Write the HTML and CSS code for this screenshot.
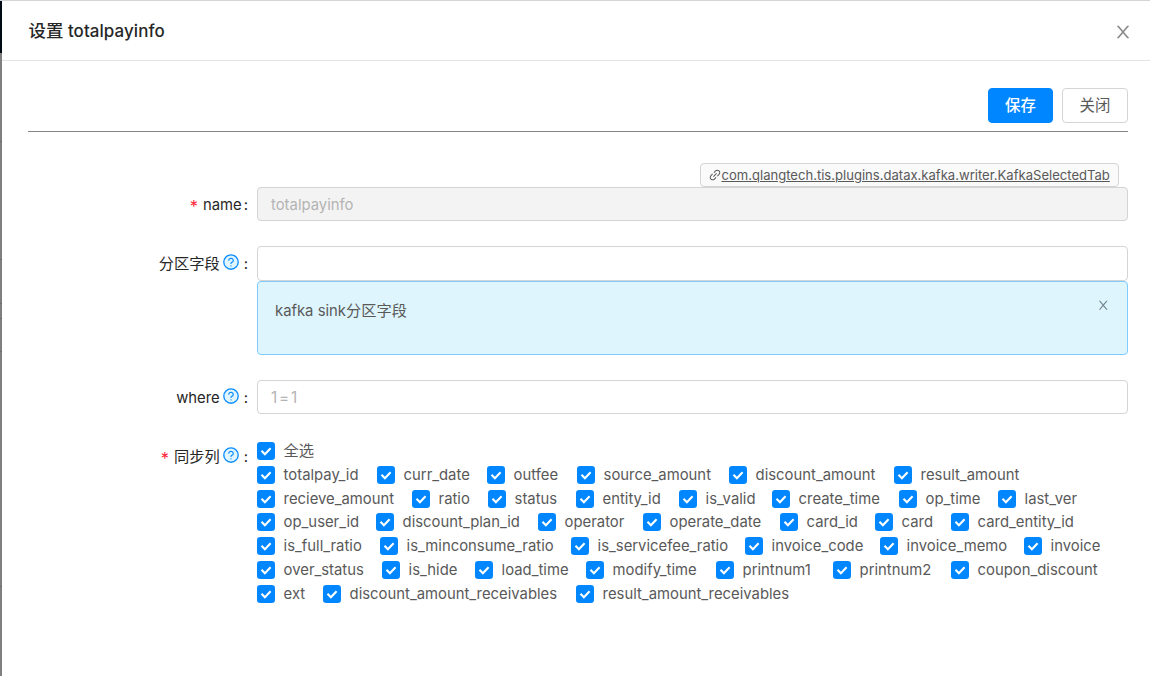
FILE: index.html
```html
<!DOCTYPE html>
<html lang="zh">
<head>
<meta charset="utf-8">
<title>设置 totalpayinfo</title>
<link rel="stylesheet" href="styles.css">
</head>
<body>
<svg class="defs">
  <symbol id="close" viewBox="0 0 1024 1024"><path d="M563.8 512l262.5-312.9c4.4-5.2.7-13.1-6.1-13.1h-79.8c-4.7 0-9.2 2.1-12.3 5.7L511.6 449.8 295.1 191.7c-3-3.6-7.5-5.7-12.3-5.7H203c-6.8 0-10.5 7.9-6.1 13.1L459.4 512 196.9 824.9A7.95 7.95 0 0 0 203 838h79.8c4.7 0 9.2-2.1 12.3-5.7l216.5-258.1 216.5 258.1c3 3.6 7.5 5.7 12.3 5.7h79.8c6.8 0 10.5-7.9 6.1-13.1L563.8 512z"/></symbol>
  <symbol id="link" viewBox="0 0 1024 1024"><path d="M574 665.4a8.03 8.03 0 0 0-11.3 0L446.5 781.6c-53.8 53.8-144.6 59.5-204 0-59.5-59.5-53.8-150.2 0-204l116.2-116.2c3.1-3.1 3.1-8.2 0-11.3l-39.8-39.8a8.03 8.03 0 0 0-11.3 0L191.4 526.5c-84.6 84.6-84.6 221.5 0 306s221.5 84.6 306 0l116.2-116.2c3.1-3.1 3.1-8.2 0-11.3L574 665.4zm258.6-474c-84.6-84.6-221.5-84.6-306 0L410.3 307.6a8.03 8.03 0 0 0 0 11.3l39.7 39.7c3.1 3.1 8.2 3.1 11.3 0l116.2-116.2c53.8-53.8 144.6-59.5 204 0 59.5 59.5 53.8 150.2 0 204L665.3 562.6a8.03 8.03 0 0 0 0 11.3l39.8 39.8c3.1 3.1 8.2 3.1 11.3 0l116.2-116.2c84.5-84.6 84.5-221.5 0-306.1zM610.1 372.3a8.03 8.03 0 0 0-11.3 0L372.3 598.7a8.03 8.03 0 0 0 0 11.3l39.6 39.6c3.1 3.1 8.2 3.1 11.3 0l226.4-226.4c3.1-3.1 3.1-8.2 0-11.3l-39.5-39.6z"/></symbol>
  <symbol id="help" viewBox="0 0 1024 1024"><circle cx="512" cy="512" r="410" fill="#e0f5ff" stroke="#0a8cff" stroke-width="76"/><path fill="#0a8cff" d="M623.6 316.7C593.6 290.4 554 276 512 276s-81.6 14.5-111.6 40.7C369.2 344 352 380.7 352 420v7.6c0 4.4 3.6 8 8 8h48c4.4 0 8-3.6 8-8V420c0-44.1 43.1-80 96-80s96 35.9 96 80c0 31.1-22 59.6-56.1 72.7-21.2 8.1-39.2 22.3-52.1 40.9-13.1 19-19.9 41.8-19.9 64.9V620c0 4.4 3.6 8 8 8h48c4.4 0 8-3.6 8-8v-22.7a48.3 48.3 0 0 1 30.9-44.8c59-22.7 97.1-74.7 97.1-132.5.1-39.3-17.1-76-48.3-103.3zM472 732a40 40 0 1 0 80 0 40 40 0 1 0-80 0z"/></symbol>
  <symbol id="check" viewBox="0 0 18 18"><rect width="18" height="18" rx="3.2" fill="#0087ff"/><path d="M4.5 8.8l3.4 3.5 5.7-6" fill="none" stroke="#fff" stroke-width="2.1"/></symbol>
</svg>
<div class="page">
  <div class="backdrop"><i class="nav"></i><i class="seg s1"></i><i class="seg s2"></i><i class="seg s3"></i><i class="seg s4"></i><i class="seg s5"></i><i class="seg s6"></i></div>
  <main class="drawer">
    <header class="header">
      <h1 class="title"><span class="cjk">设置</span> totalpayinfo</h1>
      <svg class="close"><use href="#close"/></svg>
    </header>
    <div class="body">
      <div class="actions">
        <button class="btn primary">保存</button>
        <button class="btn">关闭</button>
      </div>
      <div class="plugin"><a class="tag"><svg class="link"><use href="#link"/></svg><span class="url">com.qlangtech.tis.plugins.datax.kafka.writer.KafkaSelectedTab</span></a></div>
      <div class="row r-name">
        <div class="label"><b class="req">*</b><span>name</span><span class="colon tight">:</span></div>
        <div class="input disabled">totalpayinfo</div>
      </div>
      <div class="row r-part">
        <div class="label"><span class="cjk">分区字段</span><svg class="help"><use href="#help"/></svg><span class="colon">:</span></div>
        <div>
          <div class="input"></div>
          <div class="alert"><span class="msg">kafka sink<span class="cjk">分区字段</span></span><svg class="dismiss"><use href="#close"/></svg></div>
        </div>
      </div>
      <div class="row r-where">
        <div class="label"><span>where</span><svg class="help"><use href="#help"/></svg><span class="colon">:</span></div>
        <div class="input hint">1=1</div>
      </div>
      <div class="row r-cols">
        <div class="label"><b class="req">*</b><span class="cjk">同步列</span><svg class="help"><use href="#help"/></svg><span class="colon">:</span></div>
        <div class="checks">
          <div class="line"><label><svg><use href="#check"/></svg><span class="cjk">全选</span></label></div>
          <div class="line l1"><label><svg><use href="#check"/></svg><span>totalpay_id</span></label><label><svg><use href="#check"/></svg><span>curr_date</span></label><label><svg><use href="#check"/></svg><span>outfee</span></label><label><svg><use href="#check"/></svg><span>source_amount</span></label><label><svg><use href="#check"/></svg><span>discount_amount</span></label><label><svg><use href="#check"/></svg><span>result_amount</span></label></div>
          <div class="line l2"><label><svg><use href="#check"/></svg><span>recieve_amount</span></label><label><svg><use href="#check"/></svg><span>ratio</span></label><label><svg><use href="#check"/></svg><span>status</span></label><label><svg><use href="#check"/></svg><span>entity_id</span></label><label><svg><use href="#check"/></svg><span>is_valid</span></label><label><svg><use href="#check"/></svg><span>create_time</span></label><label><svg><use href="#check"/></svg><span>op_time</span></label><label><svg><use href="#check"/></svg><span>last_ver</span></label></div>
          <div class="line l3"><label><svg><use href="#check"/></svg><span>op_user_id</span></label><label><svg><use href="#check"/></svg><span>discount_plan_id</span></label><label><svg><use href="#check"/></svg><span>operator</span></label><label><svg><use href="#check"/></svg><span>operate_date</span></label><label><svg><use href="#check"/></svg><span>card_id</span></label><label><svg><use href="#check"/></svg><span>card</span></label><label><svg><use href="#check"/></svg><span>card_entity_id</span></label></div>
          <div class="line l4"><label><svg><use href="#check"/></svg><span>is_full_ratio</span></label><label><svg><use href="#check"/></svg><span>is_minconsume_ratio</span></label><label><svg><use href="#check"/></svg><span>is_servicefee_ratio</span></label><label><svg><use href="#check"/></svg><span>invoice_code</span></label><label><svg><use href="#check"/></svg><span>invoice_memo</span></label><label><svg><use href="#check"/></svg><span>invoice</span></label></div>
          <div class="line l5"><label><svg><use href="#check"/></svg><span>over_status</span></label><label><svg><use href="#check"/></svg><span>is_hide</span></label><label><svg><use href="#check"/></svg><span>load_time</span></label><label><svg><use href="#check"/></svg><span>modify_time</span></label><label><svg><use href="#check"/></svg><span>printnum1</span></label><label><svg><use href="#check"/></svg><span>printnum2</span></label><label><svg><use href="#check"/></svg><span>coupon_discount</span></label></div>
          <div class="line l6"><label><svg><use href="#check"/></svg><span>ext</span></label><label><svg><use href="#check"/></svg><span>discount_amount_receivables</span></label><label><svg><use href="#check"/></svg><span>result_amount_receivables</span></label></div>
        </div>
      </div>
    </div>
  </main>
</div>
</body>
</html>
```
FILE: styles.css
```css
* { box-sizing: border-box; }
body {
  margin: 0;
  font: 14.85px/22px Inter, "Noto Sans CJK SC", sans-serif;
  color: #595959;
  background: #fff;
}
.defs { position: absolute; width: 0; height: 0; }
svg { display: block; flex: none; fill: currentColor; }
.cjk { font-size: 15.25px; letter-spacing: 0; }
.page { display: flex; height: 676px; border-top: 1px solid #d4d4d4; overflow: hidden; }

.backdrop { width: 2px; flex: none; display: flex; flex-direction: column; background: #7f7f7f; }
.nav { height: 52px; background: #000a14; }
.seg { border-bottom: 1px solid #6c6c6c; }
.s1 { height: 89px; }
.s2 { height: 118px; }
.s3 { height: 44px; }
.s4 { height: 15px; }
.s5 { height: 33px; }
.s6 { height: 235px; }

.drawer { flex: 1; }
.header {
  display: flex;
  justify-content: space-between;
  height: 60px;
  padding: 18px 20px 0 26.5px;
  border-bottom: 1px solid #e3e3e3;
}
.title { margin: 0; font-size: 16.9px; line-height: 24px; font-weight: 500; letter-spacing: 0.1px; color: #262626; }
.title .cjk { font-size: 17.4px; font-weight: 500; }
.close { width: 20px; height: 20px; margin: 3px -3px 0 0; color: #8a8a8a; }
.body { padding: 27px 22px 0 26px; }
.actions {
  display: flex;
  justify-content: flex-end;
  gap: 9px;
  height: 44px;
  border-bottom: 1px solid #848484;
}
.btn {
  width: 66px;
  height: 35px;
  padding: 0 0 2px;
  border: 1px solid #d4d4d4;
  border-radius: 4px;
  background: #fff;
  font: 15.4px/31px "Noto Sans CJK SC", sans-serif;
  color: #595959;
}
.primary { width: 65px; background: #0087ff; border-color: #0087ff; color: #fff; font-weight: 500; }

.plugin { display: flex; justify-content: flex-end; padding: 31px 9px 0 0; }
.tag {
  display: flex;
  align-items: center;
  width: 419px;
  height: 24px;
  padding-left: 6.5px;
  border: 1px solid #d4d4d4;
  border-radius: 4px;
  background: #fafafa;
  font-size: 13.07px;
}
.link { width: 14px; height: 14px; }
.url { text-decoration: underline; white-space: nowrap; }

.row { display: grid; grid-template-columns: 220px 871px; column-gap: 9px; }
.label { display: flex; justify-content: flex-end; align-items: center; height: 34px; padding-top: 2px; color: #262626; }
.req { margin-right: 5px; padding-top: 2px; color: #ff2a3c; font-size: 16.5px; font-weight: 400; }
.help { width: 18px; height: 18px; margin: -4px 0 0 2px; }
.colon { margin-left: 4px; }
.tight { margin-left: 2px; }
.input {
  height: 34px;
  padding: 0 13px;
  border: 1px solid #d4d4d4;
  border-radius: 4px;
  line-height: 34px;
}
.disabled { background: #f3f3f3; color: #b4b4b4; }
.hint { color: #b4b4b4; font-size: 15.25px; letter-spacing: 1.8px; }
.r-part { margin-top: 25px; }
.r-part .input { height: 35px; }
.alert {
  display: flex;
  justify-content: space-between;
  height: 74px;
  padding: 18px 17px;
  border: 1px solid #7fcbff;
  border-radius: 4px;
  background: #def5fe;
}
.dismiss { width: 14.5px; height: 14.5px; margin: -2px -0.5px 0 0; color: #76868c; }
.r-where { margin-top: 25px; }
.r-cols { margin-top: 25px; }

.checks { padding-top: 0.4px; }
.line { display: grid; height: 23.73px; white-space: nowrap; }
.line label { display: flex; gap: 8.6px; align-items: center; height: 23.75px; }
.line svg { width: 18px; height: 18px; }
.l1 { grid-template-columns: 120px 110px 90px 152px 165px auto; }
.l2 { grid-template-columns: 155px 76px 88px 103px 93px 127px 99px auto; }
.l3 { grid-template-columns: 119px 162px 105px 137px 95px 76px auto; }
.l4 { grid-template-columns: 123px 191px 174px 135px 144px auto; }
.l5 { grid-template-columns: 125px 93px 111px 130px 117px 118px auto; }
.l6 { grid-template-columns: 66px 253px auto; }
```
